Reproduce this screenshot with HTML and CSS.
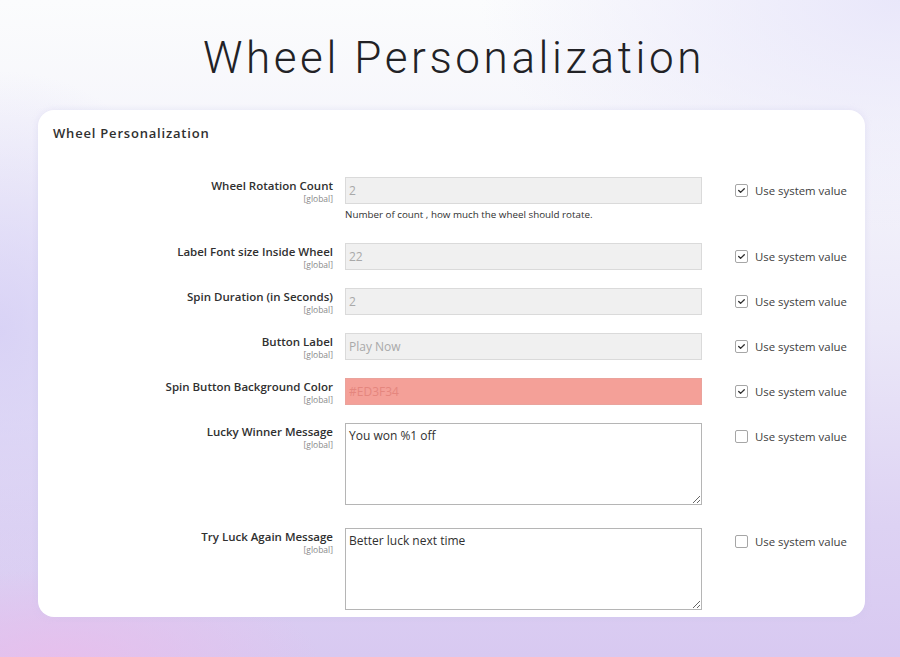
FILE: index.html
```html
<!DOCTYPE html>
<html lang="en">
<head>
<meta charset="utf-8">
<title>Wheel Personalization</title>
<link rel="stylesheet" href="styles.css">
</head>
<body>
<div class="page">
  <h1 class="title">Wheel Personalization</h1>
  <section class="card">
    <h2 class="card-title">Wheel Personalization</h2>
    <div class="form">
      <div class="label"><span class="name">Wheel Rotation Count</span><span class="scope">[global]</span></div>
      <div class="control with-note"><input class="field disabled" type="text" value="2" disabled><p class="note">Number of count , how much the wheel should rotate.</p></div>
      <div class="system"><span class="check on"><svg viewBox="0 0 13 13"><path d="M3.2 6.6 L5.4 8.7 L9.8 4.4"/></svg></span><span>Use system value</span></div>

      <div class="label"><span class="name">Label Font size Inside Wheel</span><span class="scope">[global]</span></div>
      <div class="control"><input class="field disabled" type="text" value="22" disabled></div>
      <div class="system"><span class="check on"><svg viewBox="0 0 13 13"><path d="M3.2 6.6 L5.4 8.7 L9.8 4.4"/></svg></span><span>Use system value</span></div>

      <div class="label"><span class="name">Spin Duration (in Seconds)</span><span class="scope">[global]</span></div>
      <div class="control"><input class="field disabled" type="text" value="2" disabled></div>
      <div class="system"><span class="check on"><svg viewBox="0 0 13 13"><path d="M3.2 6.6 L5.4 8.7 L9.8 4.4"/></svg></span><span>Use system value</span></div>

      <div class="label"><span class="name">Button Label</span><span class="scope">[global]</span></div>
      <div class="control"><input class="field disabled" type="text" value="Play Now" disabled></div>
      <div class="system"><span class="check on"><svg viewBox="0 0 13 13"><path d="M3.2 6.6 L5.4 8.7 L9.8 4.4"/></svg></span><span>Use system value</span></div>

      <div class="label"><span class="name">Spin Button Background Color</span><span class="scope">[global]</span></div>
      <div class="control"><input class="field color" type="text" value="#ED3F34" disabled></div>
      <div class="system"><span class="check on"><svg viewBox="0 0 13 13"><path d="M3.2 6.6 L5.4 8.7 L9.8 4.4"/></svg></span><span>Use system value</span></div>

      <div class="label"><span class="name">Lucky Winner Message</span><span class="scope">[global]</span></div>
      <div class="control tall"><textarea class="area">You won %1 off</textarea></div>
      <div class="system"><span class="check"></span><span>Use system value</span></div>

      <div class="label"><span class="name">Try Luck Again Message</span><span class="scope">[global]</span></div>
      <div class="control last"><textarea class="area">Better luck next time</textarea></div>
      <div class="system"><span class="check"></span><span>Use system value</span></div>
    </div>
  </section>
</div>
</body>
</html>
```

FILE: styles.css
```css
html, body {
  margin: 0;
  padding: 0;
  height: 657px;
  overflow: hidden;
}

body {
  font-family: "Open Sans", "Noto Sans", sans-serif;
  color: #303030;
  background:
    radial-gradient(ellipse 260px 90px at 60px 660px, rgba(232, 190, 236, 0.9), rgba(232, 190, 236, 0) 100%),
    radial-gradient(ellipse 220px 260px at 0px 330px, rgba(212, 205, 245, 0.8), rgba(212, 205, 245, 0) 100%),
    radial-gradient(ellipse 420px 230px at 900px 0px, rgba(232, 230, 250, 0.95), rgba(232, 230, 250, 0) 100%),
    linear-gradient(180deg, #fbfcfd 0%, #f5f5fb 22%, #ebe8f8 50%, #ddd2f3 80%, #d8c9f1 100%);
}

.page {
  display: flex;
  flex-direction: column;
  align-items: center;
}

.title {
  margin: 28px 0 0 8px;
  height: 82px;
  font-family: Roboto, "Liberation Sans", sans-serif;
  font-weight: 300;
  font-size: 44px;
  line-height: 60px;
  color: #222226;
  letter-spacing: 3.6px;
}

.card {
  box-sizing: border-box;
  width: 827px;
  height: 507px;
  margin-left: 3px;
  background: #fff;
  border-radius: 16px;
  padding: 14px 15px 0 15px;
  box-shadow: 0 0 6px rgba(200, 195, 235, 0.35);
}

.card-title {
  margin: 0;
  font-size: 13px;
  line-height: 18px;
  font-weight: 600;
  letter-spacing: 0.8px;
  color: #303030;
}

.form {
  margin-top: 35px;
  display: grid;
  grid-template-columns: 280px 357px auto;
  column-gap: 12px;
  row-gap: 18px;
  align-items: start;
}

.label {
  display: flex;
  flex-direction: column;
  align-items: flex-end;
  text-align: right;
  padding-top: 1px;
}

.name {
  font-size: 11.5px;
  line-height: 15px;
  font-weight: 600;
  color: #303030;
  white-space: nowrap;
}

.scope {
  font-size: 8.5px;
  line-height: 11px;
  color: #8a8a8a;
}

.control {
  display: flex;
  flex-direction: column;
}

.control.with-note {
  height: 48px;
}

.control.tall {
  height: 87px;
}

.field {
  box-sizing: border-box;
  display: block;
  width: 357px;
  height: 27px;
  margin: 0;
  padding: 0 3px;
  border: 1px solid #dadada;
  font-family: "Open Sans", sans-serif;
  font-size: 12px;
  color: #a9a9a9;
  outline: none;
}

.field.disabled {
  background: #f0f0f0;
}

.field.color {
  background: #f4a098;
  border-color: #eaa39c;
  color: #e5867e;
}

.note {
  margin: 4px 0 0 0;
  font-size: 9.8px;
  line-height: 14px;
  color: #303030;
  white-space: nowrap;
}

.area {
  box-sizing: border-box;
  display: block;
  width: 357px;
  height: 82px;
  margin: 0;
  padding: 3px 3px;
  border: 1px solid #b5b5b5;
  font-family: "Open Sans", sans-serif;
  font-size: 12px;
  line-height: 18px;
  color: #303030;
  background: #fff;
  outline: none;
}

.system {
  margin-left: 21px;
  height: 27px;
  display: flex;
  align-items: center;
  gap: 7px;
  font-size: 11.4px;
  color: #3d3d3d;
  white-space: nowrap;
}

.check {
  box-sizing: border-box;
  width: 13px;
  height: 13px;
  border: 1px solid #a6a6a6;
  border-radius: 2px;
  background: #fff;
  display: flex;
  flex: none;
}

.check svg {
  width: 11px;
  height: 11px;
}

.check svg path {
  fill: none;
  stroke: #303030;
  stroke-width: 1.6;
  stroke-linecap: round;
  stroke-linejoin: round;
}
```
